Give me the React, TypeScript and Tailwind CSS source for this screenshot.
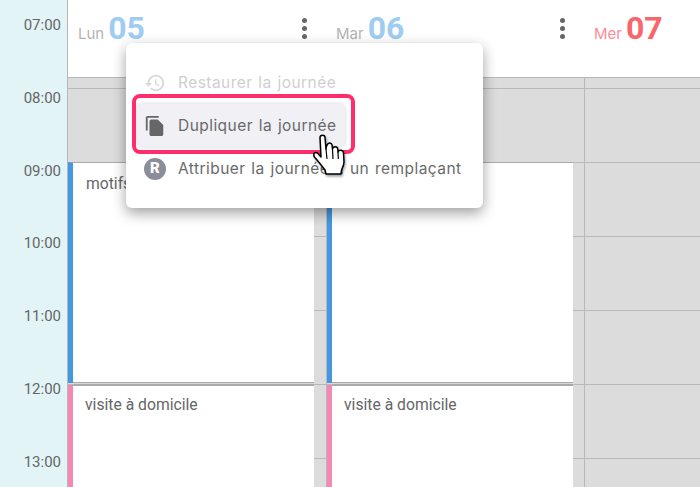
const LINE = "border-[#b8b8b8]";

const hours = ["07:00", "08:00", "09:00", "10:00", "11:00", "12:00", "13:00"];

const days = [
  { label: "Lun", num: "05", labelColor: "text-[#b3b3b3]", numColor: "text-[#9fcdf1]", menu: true, pad: "pl-[10px]" },
  { label: "Mar", num: "06", labelColor: "text-[#b3b3b3]", numColor: "text-[#9fcdf1]", menu: true, pad: "pl-[9px]" },
  { label: "Mer", num: "07", labelColor: "text-[#ff8b96]", numColor: "text-[#f8656b]", menu: false, pad: "pl-[9px]" },
];

const DotsIcon = () => (
  <div className="flex flex-col gap-[3px]">
    <span className="h-[5px] w-[5px] rounded-full bg-[#666]" />
    <span className="h-[5px] w-[5px] rounded-full bg-[#666]" />
    <span className="h-[5px] w-[5px] rounded-full bg-[#666]" />
  </div>
);

const DayHeader = ({ day }: { day: (typeof days)[number] }) => (
  <div className={`flex items-start justify-between pr-[20px] pt-[9px] ${day.pad}`}>
    <div className="flex items-baseline gap-[4px] font-['Roboto',sans-serif]">
      <span className={`font-['Inter',sans-serif] text-[15px] ${day.labelColor}`}>{day.label}</span>
      <span className={`text-[32px] leading-[38px] font-bold ${day.numColor}`}>{day.num}</span>
    </div>
    {day.menu && (
      <div className="pt-[9px]">
        <DotsIcon />
      </div>
    )}
  </div>
);

const Slots = () => (
  <>
    <div className={`h-[11px] border-b ${LINE}`} />
    {[0, 1, 2, 3, 4, 5].map((i) => (
      <div key={i} className={`h-[74px] border-b ${LINE}`} />
    ))}
  </>
);

const Cards = ({ title }: { title?: string }) => (
  <div className="absolute left-0 top-[84px] bottom-0 flex w-[246px] flex-col font-['Roboto',sans-serif] text-[15.7px] text-[#666]">
    <div className="h-[221px] border-t border-[#aaa] border-l-[5px] border-l-[#4299e1] bg-white">
      <div className="h-full border-b border-[#aaa] pl-[13px] pt-[11px] leading-[20px]">{title}</div>
    </div>
    <div className="ml-[6px] h-[2px] shrink-0 border-b border-[#aaa] bg-[#d8d8d8]" />
    <div className="flex-1 border-l-[5px] border-[#f687b3] bg-white">
      <div className="h-full border-t border-[#aaa] pl-[12px] pt-[9px] leading-[20px]">visite à domicile</div>
    </div>
  </div>
);

const MenuItem = ({
  icon,
  label,
  muted,
  active,
}: {
  icon: React.ReactNode;
  label: string;
  muted?: boolean;
  active?: boolean;
}) => (
  <div
    className={`ml-[11px] flex h-[43px] w-[208px] items-center whitespace-nowrap rounded-[6px] pl-[7px] ${
      muted ? "text-[#cfcfcf]" : "text-[#6a6a6a]"
    } ${active ? "bg-[#f0f0f5] shadow-[0_0_4px_rgba(0,0,0,0.18)]" : ""}`}
  >
    <div className="flex w-[34px] shrink-0 items-center">{icon}</div>
    <span>{label}</span>
  </div>
);

const DayMenu = () => (
  <div className="absolute left-[126px] top-[43px] h-[165px] w-[357px] rounded-[6px] bg-white pt-[18px] font-['Inter',sans-serif] text-[15.500px] tracking-[0.45px] [word-spacing:1px] shadow-[0_5px_14px_rgba(0,0,0,0.38)]">
    <MenuItem
      muted
      label="Restaurer la journée"
      icon={
        <svg viewBox="0 0 24 24" className="h-[22px] w-[22px] fill-[#d8d8d8]">
          <path d="M13 3c-4.970 0-9 4.030-9 9H1l3.890 3.890.07.14L9 12H6c0-3.870 3.130-7 7-7s7 3.130 7 7-3.130 7-7 7c-1.930 0-3.680-.79-4.940-2.060l-1.420 1.420C8.270 19.990 10.510 21 13 21c4.970 0 9-4.030 9-9s-4.030-9-9-9zm-1 5v5l4.280 2.540.72-1.210-3.500-2.080V8H12z" />
        </svg>
      }
    />
    <MenuItem
      active
      label="Dupliquer la journée"
      icon={
        <svg viewBox="0 0 24 24" className="h-[22px] w-[22px] fill-[#666]">
          <path d="M16 1H4c-1.100 0-2 .9-2 2v14h2V3h12V1zm-1 4l6 6v10c0 1.100-.9 2-2 2H7.990C6.890 23 6 22.100 6 21l.01-14c0-1.100.89-2 1.990-2h7z" />
        </svg>
      }
    />
    <MenuItem
      label="Attribuer la journée à un remplaçant"
      icon={
        <span className="flex h-[22px] w-[22px] items-center justify-center rounded-full bg-[#8b8e99] font-['Roboto',sans-serif] text-[15px] font-black tracking-normal text-white">
          R
        </span>
      }
    />
    {/* annotation frame around the hovered row */}
    <div className="absolute left-[6px] top-[51px] h-[60px] w-[223px] rounded-[8px] border-[4px] border-[#ff2d6c]" />
  </div>
);

const HandCursor = () => (
  <svg
    viewBox="0 0 36 44"
    className="absolute left-[312px] top-[134px] h-[44px] w-[36px] drop-shadow-[1px_2px_1px_rgba(0,0,0,0.35)]"
  >
    <path
      d="M8 3.500C8 .5 13 .5 13 3.500L14 15C14.500 8 19.500 8 20 11L20.500 15C21 12 25.500 12 25.800 15L26 18C27 15.500 31 15.500 31.500 19L32 28C32 31 30.500 34 29.500 36L29 40H14L13 36C10 32 6 27 2.500 23 .5 20 3 17.500 5.500 19L9 23Z"
      fill="#fff"
      stroke="#000"
      strokeWidth="1.500"
      strokeLinejoin="round"
    />
    <path d="M14 15 15 25M20.500 15 21 25M26 18 26.300 25" fill="none" stroke="#000" strokeWidth="1.200" />
  </svg>
);

export default function App() {
  return (
    <div className="relative flex h-[487px] w-[700px] overflow-hidden bg-white">
      <div className={`flex w-[68px] shrink-0 flex-col items-end border-r ${LINE} bg-[#e3f4f7] pr-[6px] pt-[15px] font-['Roboto',sans-serif] text-[15px] text-[#666]`}>
        {hours.map((h) => (
          <div key={h} className="h-[72.8px] shrink-0 leading-[20px]">
            {h}
          </div>
        ))}
      </div>

      <div className="flex min-w-0 flex-1 flex-col">
        <div className={`grid h-[78px] shrink-0 grid-cols-[259px_258px_1fr] border-b ${LINE}`}>
          {days.map((d) => (
            <DayHeader key={d.num} day={d} />
          ))}
        </div>
        <div className="grid flex-1 grid-cols-[259px_258px_1fr] bg-[#dcdcdc]">
          <div className={`relative border-r ${LINE}`}>
            <Slots />
            <Cards title="motifs" />
          </div>
          <div className={`relative border-r ${LINE}`}>
            <Slots />
            <Cards />
          </div>
          <div>
            <Slots />
          </div>
        </div>
      </div>

      <DayMenu />
      <HandCursor />
    </div>
  );
}
